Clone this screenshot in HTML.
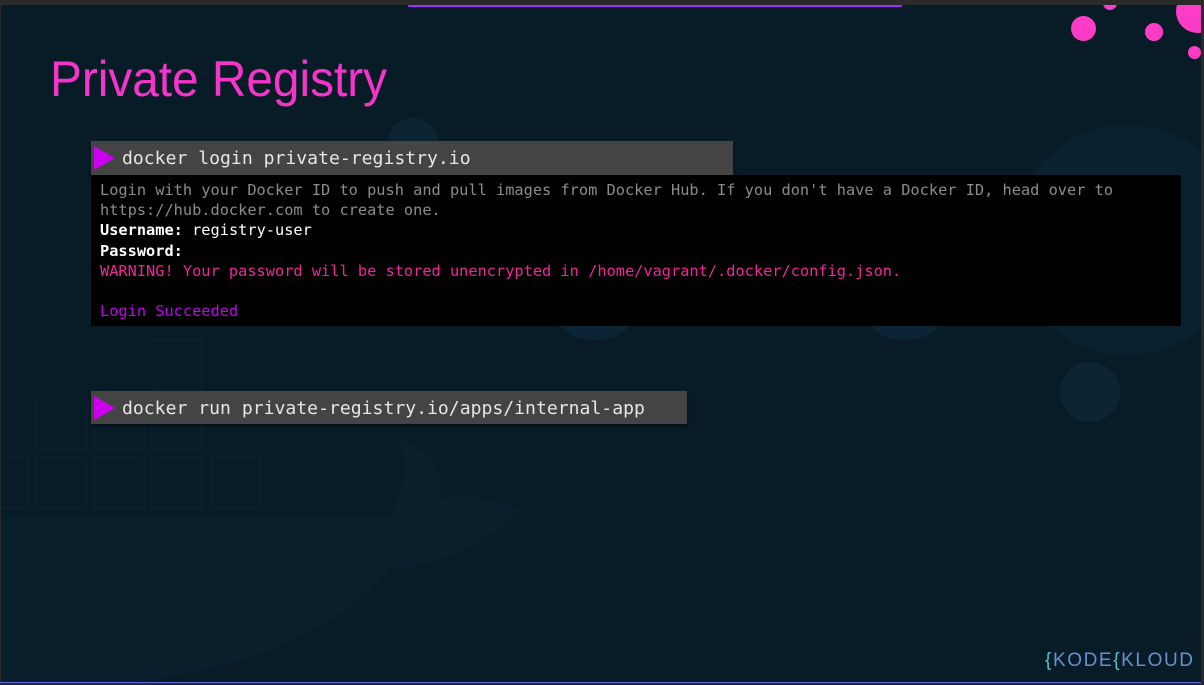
<!DOCTYPE html>
<html><head><meta charset="utf-8"><style>
html,body{margin:0;padding:0}
body{width:1204px;height:685px;position:relative;overflow:hidden;background:#081c28;font-family:"Liberation Sans",sans-serif}
.abs{position:absolute}
.mono{font-family:"DejaVu Sans Mono","Liberation Mono",monospace}
.top{left:0;top:0;width:1204px;height:5px;background:#2a2a2a}
.right{right:0;top:0;width:3px;height:685px;background:#2a2a2a}
.left{left:0;top:0;width:1px;height:685px;background:#2a2a2a}
.bot{left:0;top:682px;width:1201px;height:1px;background:#5a6de0}
.bot2{left:0;top:683px;width:1204px;height:2px;background:#2a2a2a}
.title{left:50px;top:50px;font-size:50px;color:#f535c9;transform:scaleX(0.955);transform-origin:left top;white-space:nowrap}
.bar{background:#444;color:#e6e6e6;font-size:18.1px;line-height:34px;box-shadow:0 2px 3px rgba(0,0,0,.5)}
.tri{position:absolute;left:3px;top:5px;width:0;height:0;border-top:12px solid transparent;border-bottom:12px solid transparent;border-left:21px solid #cc00ee}
.out{left:91px;top:175px;width:1090px;height:151px;background:#000;font-size:15.3px;line-height:20.2px;color:#8c8c8c;padding:5px 0 0 9px;box-sizing:border-box;white-space:pre}
.w{color:#fff}.b{font-weight:bold}.pk{color:#f0249b}.pu{color:#c000ee}
.c{border-radius:50%;background:#ff3cc8;position:absolute}
.bg{border-radius:50%;background:#0b2535;position:absolute}
</style></head><body>
<div class="bg" style="left:1012px;top:125px;width:230px;height:230px;background:#0a2230"></div>
<div class="bg" style="left:388px;top:118px;width:50px;height:50px"></div>
<div class="bg" style="left:1060px;top:362px;width:60px;height:60px"></div>
<div class="bg" style="left:560px;top:300px;width:70px;height:40px"></div>
<div class="bg" style="left:870px;top:300px;width:70px;height:40px"></div>
<svg class="abs" style="left:0;top:330px" width="700" height="355">
<g fill="none" stroke="#0b202d" stroke-width="2">
<rect x="152" y="10" width="50" height="50"/>
<rect x="36" y="70" width="50" height="50"/><rect x="94" y="70" width="50" height="50"/><rect x="152" y="70" width="50" height="50"/>
<rect x="0" y="128" width="28" height="50"/><rect x="36" y="128" width="50" height="50"/><rect x="94" y="128" width="50" height="50"/><rect x="152" y="128" width="50" height="50"/><rect x="211" y="128" width="50" height="50"/>
<circle cx="83" cy="275" r="12"/>
</g>
<path d="M0 188 L390 188 Q410 150 400 110 Q450 130 440 170 Q470 160 520 180 Q470 230 390 240 Q300 340 100 355 L0 355Z" fill="#09202c"/>
</svg>
<div class="abs" style="left:408px;top:5px;width:494px;height:2px;background:#9b30ff"></div>
<div class="c" style="left:1071px;top:16px;width:25px;height:25px"></div>
<div class="c" style="left:1103px;top:0;width:14px;height:10px;border-radius:0 0 7px 7px"></div>
<div class="c" style="left:1145px;top:23px;width:18px;height:18px"></div>
<div class="c" style="left:1176px;top:-10px;width:44px;height:43px"></div>
<div class="c" style="left:1188px;top:46px;width:13px;height:13px"></div>
<div class="abs title">Private Registry</div>
<div class="abs bar mono" style="left:91px;top:141px;width:642px;height:34px"><div class="tri"></div><span style="position:absolute;left:31px;top:1px">docker login private-registry.io</span></div>
<div class="abs out mono">Login with your Docker ID to push and pull images from Docker Hub. If you don't have a Docker ID, head over to
https://hub.docker.com to create one.
<span class="w b">Username:</span><span class="w"> registry-user</span>
<span class="w b">Password:</span>
<span class="pk">WARNING! Your password will be stored unencrypted in /home/vagrant/.docker/config.json.</span>

<span class="pu">Login Succeeded</span></div>
<div class="abs bar mono" style="left:91px;top:391px;width:596px;height:33px"><div class="tri"></div><span style="position:absolute;left:31px;top:1px">docker run private-registry.io/apps/internal-app</span></div>
<div class="abs" style="left:1045px;top:650px;font-size:19px;letter-spacing:1.6px;color:#6a8fd0;white-space:nowrap"><span style="color:#4fc3c9">{</span>KODE<span style="color:#4fc3c9">{</span>KLOUD</div>
<div class="abs top"></div><div class="abs right"></div><div class="abs left"></div><div class="abs bot"></div><div class="abs bot2"></div>
</body></html>
